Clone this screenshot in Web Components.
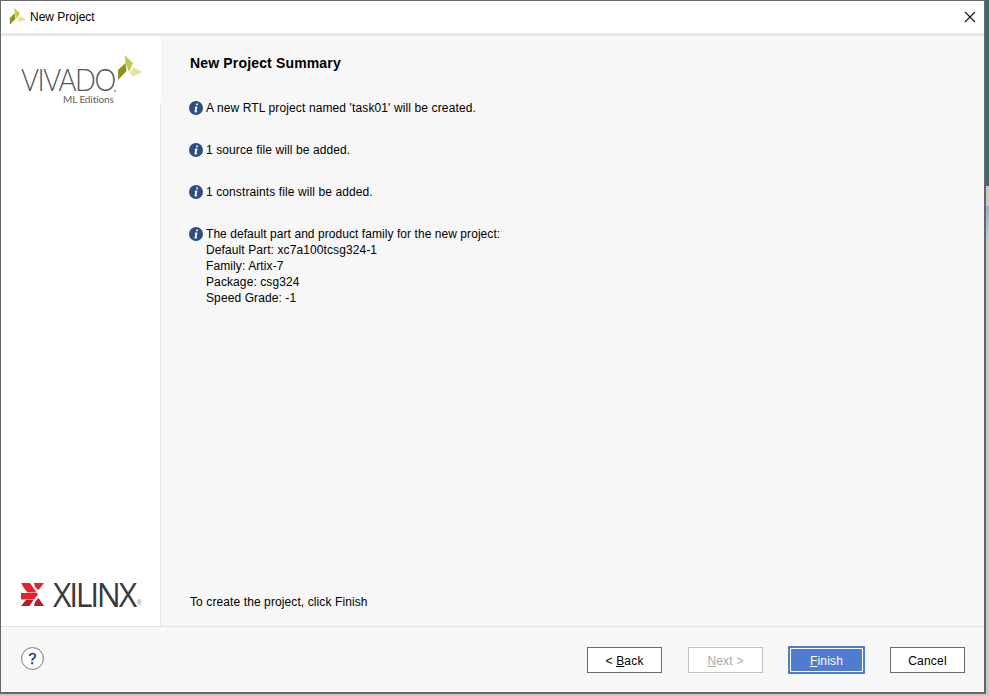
<!DOCTYPE html>
<html><head><meta charset="utf-8">
<style>
html,body{margin:0;padding:0;height:696px;overflow:hidden}
body{width:989px;background:linear-gradient(to bottom,#3c6a68 0,#3c6a68 186px,#c9c9c9 186px,#c9c9c9 206px,#8fb0cc 206px,#c9c9c9 240px,#c9c9c9 696px);font-family:"Liberation Sans",Arial,sans-serif}
</style></head><body>
<template id="t-leaf"><style>:host{display:block;line-height:0}</style><svg viewBox="0 0 25 27" width="100%" height="100%"><polygon points="7.500,0 16,8 12,17 8.500,8" fill="#c8c74a"/><polygon points="1,15 8.500,8 9.500,16 1,25" fill="#8f8f1e"/><polygon points="12.500,18 17,12.500 25,17 16,21.500" fill="#e2e59a"/></svg></template>
<x-dialog>
  <x-vivado-logo slot="brand-top"></x-vivado-logo>
  <x-xilinx-logo slot="brand-bottom"></x-xilinx-logo>
  <x-heading slot="heading">New Project Summary</x-heading>
  <x-info slot="items"><span style="letter-spacing:.12px">A new RTL project named 'task01' will be created.</span></x-info>
  <x-info slot="items">1 source file will be added.</x-info>
  <x-info slot="items">1 constraints file will be added.</x-info>
  <x-info slot="items"><span style="letter-spacing:.06px">The default part and product family for the new project:</span><br>Default Part: xc7a100tcsg324-1<br>Family: Artix-7<br>Package: csg324<br>Speed Grade: -1</x-info>
  <span slot="hint">To create the project, click Finish</span>
  <x-button slot="actions" style="margin-right:26px"><span>&lt; <u>B</u>ack</span></x-button>
  <x-button slot="actions" disabled style="margin-right:26px"><span><u>N</u>ext &gt;</span></x-button>
  <x-button slot="actions" primary style="margin-right:25px"><span><u>F</u>inish</span></x-button>
  <x-button slot="actions"><span>Cancel</span></x-button>
</x-dialog>
<script>
const leaf=()=>document.getElementById('t-leaf').content.cloneNode(true);
class Base extends HTMLElement{
  constructor(){super();this.attachShadow({mode:'open'}).innerHTML=this.constructor.html;}
}
class XLeaf extends HTMLElement{
  constructor(){super();this.attachShadow({mode:'open'}).appendChild(leaf());}
}
customElements.define('x-leaf',XLeaf);
class XDialog extends Base{static html=`<style>
:host{display:flex;flex-direction:column;box-sizing:border-box;width:986px;height:694px;background:#f7f7f7;border:solid #666;border-width:1px 2px 2px 1px;color:#000;font:12px/16px "Liberation Sans",Arial,sans-serif;letter-spacing:.1px}
.title{display:flex;align-items:center;height:32px;flex:none;background:#fff;border-bottom:3px solid #e8e8e8;font-size:12px;color:#000;letter-spacing:0}
.title x-leaf{width:17px;height:18px;margin:0 4px 0 8px}
.title span{flex:1}
.close{width:12px;height:12px;margin-right:8px;display:block}
.middle{flex:1;display:flex;min-height:0}
.brand{width:159px;flex:none;background:#fff;display:flex;flex-direction:column;justify-content:space-between;border-right:1px solid #e6e6e6;position:relative}
.cover{position:absolute;right:-1px;top:0;width:1px;height:67px;background:#fff}
.content{flex:1;padding:19px 0 16px 29px;display:flex;flex-direction:column}
.items{display:flex;flex-direction:column;gap:26px;margin-top:29px;flex:1}
.foot{display:flex;align-items:center;flex:none;height:66px;box-sizing:border-box;border-top:1px solid #e3e3e3;padding:0 19px 0 20px}
.help{flex:1;display:flex}
.help svg{display:block;margin-bottom:2px}
</style>
<div class="title"><x-leaf></x-leaf><span>New Project</span>
<svg class="close" viewBox="0 0 12 12"><path d="M1 1L11 11M11 1L1 11" stroke="#1a1a1a" stroke-width="1.2" fill="none"/></svg></div>
<div class="middle"><div class="brand"><div class="cover"></div><slot name="brand-top"></slot><slot name="brand-bottom"></slot></div>
<div class="content"><slot name="heading"></slot><div class="items"><slot name="items"></slot></div><slot name="hint"></slot></div></div>
<div class="foot"><div class="help"><svg width="23" height="23" viewBox="0 0 24 24"><circle cx="12" cy="12" r="11.400" fill="#fff" stroke="#6f6f6f" stroke-width="1"/><path d="M8.200 9.400C8.300 7.100 9.900 6 12 6c2.300 0 3.900 1.200 3.900 3.200 0 1.600-.9 2.400-2 3.200-.9.600-1.200 1-1.200 2h-2c0-1.700.5-2.400 1.600-3.200.9-.7 1.500-1.200 1.500-2 0-.9-.7-1.500-1.800-1.500-1.200 0-1.800.7-1.800 1.700zM10.600 15.600h2.200v2.300h-2.200z" fill="#2f4f8f"/></svg></div><slot name="actions"></slot></div>`}
customElements.define('x-dialog',XDialog);
class XVivado extends Base{static html=`<style>
:host{display:block;height:67px;position:relative;background:#fff;letter-spacing:normal}
.w{display:flex;flex-direction:column;padding:31px 0 0 20px}
.v{font:300 31px/24px Lato,sans-serif;color:#505356;letter-spacing:-1.600px;white-space:nowrap;transform:scaleX(.885);transform-origin:0 50%}
.m{font:10px/10px Lato,sans-serif;color:#5f6164;margin:3px 0 0 42px;letter-spacing:-.1px;white-space:nowrap}
.d{position:absolute;left:113px;top:54px;width:2px;height:2px;border-radius:50%;background:#8a8a8a}
x-leaf{position:absolute;left:116px;top:19px;width:25px;height:27px}
</style><div class="w"><div class="v">VIVADO</div><div class="m">ML Editions</div></div><div class="d"></div><x-leaf></x-leaf>`}
customElements.define('x-vivado-logo',XVivado);
class XXilinx extends Base{static html=`<style>
:host{display:flex;align-items:center;height:23px;padding:0 0 20px 20px;background:#fff;white-space:nowrap;letter-spacing:normal}
svg{width:23px;height:23px;flex:none;margin-right:9px}
.t{font:400 32px/23px "Open Sans",sans-serif;color:#3a3a3a;letter-spacing:-2.300px;display:block}
.r{font:7px/7px "Liberation Sans",sans-serif;color:#888;align-self:flex-end;margin:0 0 0 2px}
</style><svg viewBox="0 0 23 23"><polygon points="0,0 9,0 15.500,9.500 6.500,9.500 3,5" fill="#e3242b"/><polygon points="0,10 16,10 17,11.500 13,16.500 0,16.500" fill="#e3242b"/><polygon points="5,17 12.500,17 8.500,23 0,23" fill="#b11f24"/><polygon points="13,0 23,0 17.500,7 14,4" fill="#e3242b"/><polygon points="14,19 17.500,15 23,23 13,23" fill="#b11f24"/></svg><span class="t">XILINX</span><span class="r">®</span>`}
customElements.define('x-xilinx-logo',XXilinx);
class XHeading extends Base{static html=`<style>:host{display:block;font:700 14px/16px "Liberation Sans",Arial,sans-serif;color:#000;letter-spacing:.16px}</style><slot></slot>`}
customElements.define('x-heading',XHeading);
class XInfo extends Base{static html=`<style>:host{display:flex;font:12px/16px "Liberation Sans",Arial,sans-serif}
svg{flex:none;width:14px;height:14px;margin:1px 3px 0 -1px;display:block}</style>
<svg viewBox="0 0 14 14"><circle cx="7" cy="7" r="7" fill="#2f4d80"/><path d="M7.300 2.600h1.700l-.3 1.700H7zM6.600 5.600h1.900l-1 4.400c-.1.400.1.500.7.300l-.1.700c-.4.300-.9.500-1.500.5-.9 0-1.200-.5-1-1.300l.7-3.500-.9.100z" fill="#fff"/></svg><div><slot></slot></div>`}
customElements.define('x-info',XInfo);
class XButton extends Base{static html=`<style>
:host{display:flex;align-items:center;justify-content:center;box-sizing:border-box;width:75px;height:26px;padding-top:2px;background:#fff;border:1px solid #6b6b6b;font:12px/16px "Liberation Sans",Arial,sans-serif;letter-spacing:.2px;color:#000;cursor:default}
:host([disabled]){color:#a8a8a8;border-color:#c0c0c0}
:host([primary]){width:77px;height:28px;margin:-1px;background:#4f7bd0;color:#fff;border:2px solid #4f7bd0;outline:1px solid #fff;outline-offset:-3px}
</style><slot></slot>`}
customElements.define('x-button',XButton);
</script>
</body></html>
